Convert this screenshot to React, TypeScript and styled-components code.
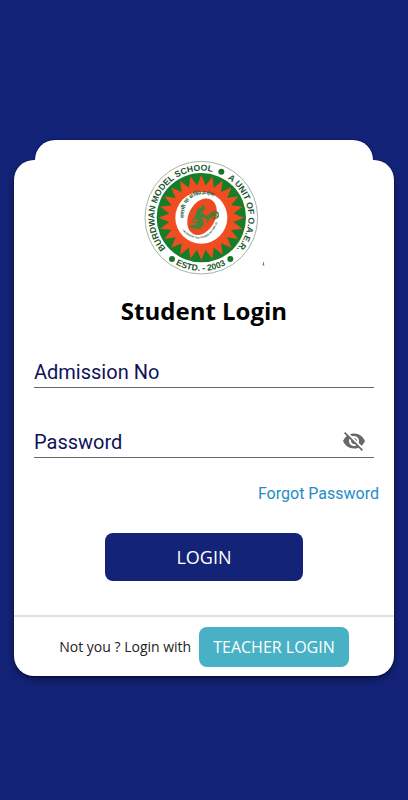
import React, { useState } from "react";
import styled, { createGlobalStyle } from "styled-components";
import { MdVisibility, MdVisibilityOff } from "react-icons/md";

const navy = "#132378";

const GlobalStyle = createGlobalStyle`
  *, *::before, *::after { box-sizing: border-box; }
  body { margin: 0; background: ${navy}; }
`;

const Page = styled.main`
  min-height: 100vh;
  display: flex;
  flex-direction: column;
  justify-content: center;
  padding: 16px 14px 0;
  background: ${navy};
  font-family: "Open Sans", sans-serif;
`;

const CardTab = styled.div`
  height: 20px;
  margin: 0 21px;
  border-radius: 20px 20px 0 0;
  background: #fff;
  box-shadow: 0 0 3px rgba(0, 0, 50, 0.6);
`;

const Card = styled.section`
  position: relative;
  border-radius: 20px;
  background: #fff;
  box-shadow: 0 4px 10px rgba(0, 0, 0, 0.35), 0 1px 2px rgba(0, 0, 50, 0.6);
  clip-path: inset(0 -20px -20px -20px);
`;

const Form = styled.form`
  display: flex;
  flex-direction: column;
  padding: 0 20px 34px;
`;

const Logo = styled.svg`
  display: block;
  width: 132px;
  height: 124px;
  margin: -5px auto 0;
  font-family: "Liberation Sans", sans-serif;
  font-weight: 700;
`;

const Title = styled.h1`
  margin: 15px 0 0;
  color: #000;
  font-size: 24px;
  font-weight: 700;
  line-height: 34px;
  text-align: center;
`;

const Field = styled.label<{ $gap: number }>`
  display: flex;
  align-items: center;
  height: 34px;
  margin-top: ${({ $gap }) => $gap}px;
  border-bottom: 1px solid #68686c;
`;

const Input = styled.input`
  flex: 1;
  min-width: 0;
  height: 33px;
  padding: 2px 0 0;
  border: 0;
  outline: 0;
  background: transparent;
  color: #101258;
  font: 400 20px "Roboto", sans-serif;

  &::placeholder { color: #101258; opacity: 1; }
`;

const IconButton = styled.button`
  display: flex;
  margin-right: 8px;
  padding: 0;
  border: 0;
  background: none;
  color: #68686a;
  cursor: pointer;
`;

const ForgotLink = styled.a`
  align-self: flex-end;
  margin: 26px -5px 0 0;
  color: #258bc7;
  font: 400 16px/20px "Roboto", sans-serif;
  text-decoration: none;
`;

const Button = styled.button`
  border: 0;
  border-radius: 8px;
  color: #fff;
  font-family: inherit;
  font-weight: 400;
  cursor: pointer;
`;

const LoginButton = styled(Button)`
  align-self: center;
  width: 198px;
  height: 48px;
  margin-top: 29px;
  background: ${navy};
  font-size: 18px;
`;

const Footer = styled.footer`
  display: flex;
  align-items: center;
  justify-content: center;
  gap: 8px;
  height: 61px;
  border-top: 2px solid #dfdfdf;
  color: #222;
  font-size: 14px;
`;

const TeacherButton = styled(Button)`
  height: 40px;
  padding: 0 14px;
  background: #49b1c5;
  font-size: 16px;
`;

const cx = 190;
const cy = 188;
const polar = (r: number, deg: number) => {
  const a = (deg * Math.PI) / 180;
  return `${(cx + r * Math.cos(a)).toFixed(1)} ${(cy + r * Math.sin(a)).toFixed(1)}`;
};
const arc = (r: number, from: number, to: number, clockwise = true) =>
  `M${polar(r, from)} A${r} ${r} 0 ${Math.abs(to - from) > 180 ? 1 : 0} ${clockwise ? 1 : 0} ${polar(r, to)}`;

const rays = 24;
const sun = Array.from({ length: rays * 2 }, (_, i) =>
  polar(i % 2 ? 97 : 128, -90 + (i * 180) / rays)
).join(" L");

function SchoolLogo() {
  return (
    <Logo viewBox="0 0 396 372" role="img" aria-label="Burdwan Model School">
      <defs>
        <path id="school" d={arc(141, 139, 310)} />
        <path id="unit" d={arc(141, -56, 60)} />
        <path id="established" d={arc(160, 119, 50, false)} />
        <path id="motto" d="M139 190 C134 128 180 101 248 133" />
        <path id="subtitle" d="M132 226 C163 260 214 265 238 204" />
      </defs>
      <circle cx={cx} cy={cy} r="169" fill="#fff" stroke="#a3b5a5" strokeWidth="3" />
      <circle cx={cx} cy={cy} r="134" fill="#187d28" />
      <path d={`M${sun} Z`} fill="#f04d20" />
      <circle cx={cx} cy={cy} r="78" fill="#fff" />
      <g fill="#1b562c">
        <text fontSize="26"><textPath href="#school">BURDWAN MODEL SCHOOL</textPath></text>
        <text fontSize="26"><textPath href="#unit">A UNIT OF O.A.E.R.</textPath></text>
        <text fontSize="26"><textPath href="#established">ESTD. - 2003</textPath></text>
      </g>
      <g fill="#187527">
        <circle cx="250" cy="50" r="9" />
        <circle cx="102" cy="312" r="9" />
        <circle cx="277" cy="312" r="9" />
      </g>
      <ellipse cx="192" cy="185" rx="40" ry="58" transform="rotate(27 192 185)" fill="#ee4a22" />
      <path d="M175 170 Q177 159 188 160 L191 151 Q203 149 201 162 L192 173 L206 183 L219 171 L223 176 L207 193 L193 187 L198 207 L186 223 L160 220 L155 211 L174 209 L179 192 L163 196 L172 182 Z" fill="#448338" />
      <path d="M161 199 L181 203 L194 213 M206 204 L217 182" fill="none" stroke="#448338" strokeWidth="5" />
      <g fill="none" stroke="#577231" strokeWidth="4">
        <circle cx="230" cy="180" r="11" />
        <path d="M219 174 L241 186 M230 169 L228 193 M218 184 L241 172" />
      </g>
      <g fill="#315f3b">
        <text fontFamily="Noto Sans, sans-serif" fontSize="16"><textPath href="#motto">नमामी या शक्तिरूपेण</textPath></text>
        <text fontSize="8"><textPath href="#subtitle">I WORSHIP THE POWER WITHIN US</textPath></text>
      </g>
      <path d="M377 321 L376 331 M374 329 L379 331" stroke="#777" strokeWidth="3" />
    </Logo>
  );
}

export default function App() {
  const [visible, setVisible] = useState(false);
  return (
    <>
      <GlobalStyle />
      <Page>
        <CardTab />
        <Card>
          <Form onSubmit={(e) => e.preventDefault()}>
            <SchoolLogo />
            <Title>Student Login</Title>
            <Field $gap={26}>
              <Input aria-label="Admission No" placeholder="Admission No" />
            </Field>
            <Field $gap={36}>
              <Input type={visible ? "text" : "password"} aria-label="Password" placeholder="Password" />
              <IconButton type="button" aria-label="Toggle password visibility" onClick={() => setVisible(!visible)}>
                {visible ? <MdVisibility size={24} /> : <MdVisibilityOff size={24} />}
              </IconButton>
            </Field>
            <ForgotLink href="#forgot">Forgot Password</ForgotLink>
            <LoginButton type="submit">LOGIN</LoginButton>
          </Form>
          <Footer>
            <span>Not you ? Login with</span>
            <TeacherButton type="button">TEACHER LOGIN</TeacherButton>
          </Footer>
        </Card>
      </Page>
    </>
  );
}
